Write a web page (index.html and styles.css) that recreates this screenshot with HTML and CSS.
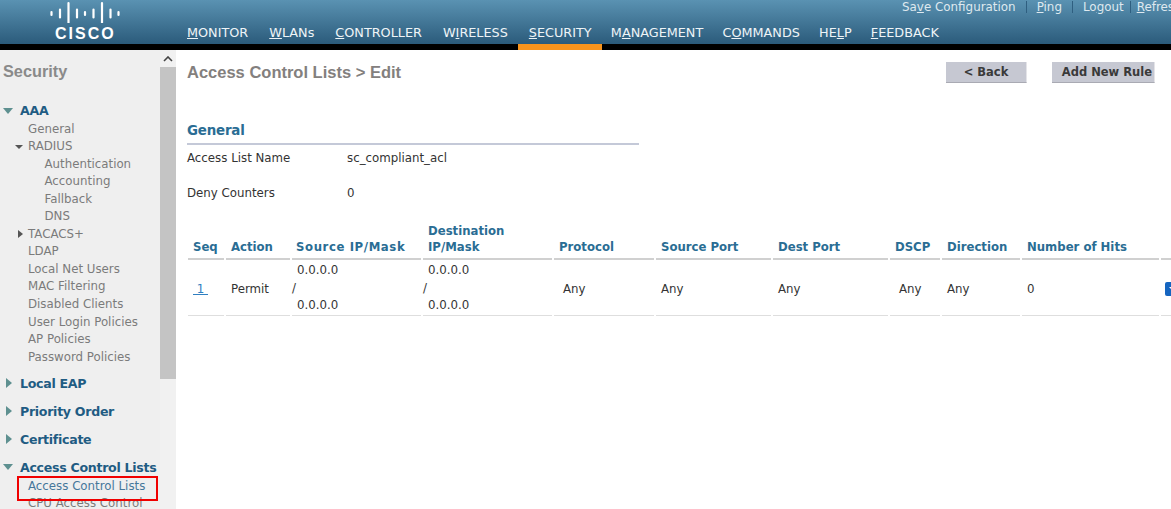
FILE: index.html
```html
<!DOCTYPE html>
<html lang="en">
<head>
<meta charset="utf-8">
<title>Access Control Lists > Edit</title>
<link rel="stylesheet" href="styles.css">
</head>
<body>
<header class="topbar">
  <div class="brand">
    <svg class="bars" width="70" height="22" viewBox="0 0 70 22" aria-hidden="true">
      <g fill="none" stroke="#fff" stroke-linecap="round" stroke-width="2.2">
        <path d="M1.5 11v3M10 8.500v8M18.500 2v20M27 8.500v8M35 11v3M43.500 8.500v8M52 2v20M60.500 8.500v8M68.500 11v3"/>
      </g>
    </svg>
    <div class="wordmark">CISCO</div>
  </div>
  <div class="topbar-main">
    <div class="utility">
      <a>Sa<u>v</u>e Configuration</a><i></i><a><u>P</u>ing</a><i></i><a>Lo<u>g</u>out</a><i class="tight"></i><a><u>R</u>efresh</a>
    </div>
    <nav class="mainnav">
      <a class="navitem"><u>M</u>ONITOR</a>
      <a class="navitem"><u>W</u>LANs</a>
      <a class="navitem"><u>C</u>ONTROLLER</a>
      <a class="navitem">W<u>I</u>RELESS</a>
      <a class="navitem narrow current"><u>S</u>ECURITY</a>
      <a class="navitem narrow">M<u>A</u>NAGEMENT</a>
      <a class="navitem narrow">C<u>O</u>MMANDS</a>
      <a class="navitem narrow">HE<u>L</u>P</a>
      <a class="navitem narrow"><u>F</u>EEDBACK</a>
    </nav>
  </div>
</header>
<div class="body-wrap">
  <aside class="sidebar">
    <div class="side-title">Security</div>
    <div class="sec first"><span class="tri down"></span>AAA</div>
    <div class="item l1">General</div>
    <div class="item l1 has"><span class="mini down"></span>RADIUS</div>
    <div class="item l2">Authentication</div>
    <div class="item l2">Accounting</div>
    <div class="item l2">Fallback</div>
    <div class="item l2">DNS</div>
    <div class="item l1 has"><span class="mini right"></span>TACACS+</div>
    <div class="item l1">LDAP</div>
    <div class="item l1">Local Net Users</div>
    <div class="item l1">MAC Filtering</div>
    <div class="item l1">Disabled Clients</div>
    <div class="item l1">User Login Policies</div>
    <div class="item l1">AP Policies</div>
    <div class="item l1">Password Policies</div>
    <div class="sec gap"><span class="tri right"></span>Local EAP</div>
    <div class="sec"><span class="tri right"></span>Priority Order</div>
    <div class="sec"><span class="tri right"></span>Certificate</div>
    <div class="sec"><span class="tri down"></span>Access Control Lists</div>
    <div class="item l1 active">Access Control Lists</div>
    <div class="item l1">CPU Access Control</div>
    <div class="redbox"></div>
  </aside>
  <div class="scrollbar">
    <div class="arrow"><svg width="10" height="6" viewBox="0 0 10 6" aria-hidden="true"><path d="M1 5l4-4 4 4" fill="none" stroke="#444" stroke-width="1.6"/></svg></div>
    <div class="thumb"></div>
  </div>
  <main class="content">
    <div class="titlebar">
      <h1>Access Control Lists &gt; Edit</h1>
      <div class="actions">
        <button class="btn btn-back">&lt; Back</button>
        <button class="btn btn-add">Add New Rule</button>
      </div>
    </div>
    <section class="general">
      <h2>General</h2>
      <div class="kv"><span class="k">Access List Name</span><span>sc_compliant_acl</span></div>
      <div class="kv kv2"><span class="k">Deny Counters</span><span>0</span></div>
    </section>
    <table class="rules">
      <colgroup>
        <col class="c1"><col class="c2"><col class="c3"><col class="c4"><col class="c5"><col class="c6"><col class="c7"><col class="c8"><col class="c9"><col class="c10"><col class="c11">
      </colgroup>
      <thead>
        <tr>
          <th class="seq">Seq</th><th>Action</th><th class="src">Source IP/Mask</th><th class="dst">Destination<br>IP/Mask</th><th>Protocol</th><th>Source Port</th><th>Dest Port</th><th>DSCP</th><th>Direction</th><th>Number of Hits</th><th></th>
        </tr>
      </thead>
      <tbody>
        <tr>
          <td class="seq"><a class="seqlink">&nbsp;1&nbsp;</a></td>
          <td>Permit</td>
          <td class="ip"><div class="ipv">0.0.0.0</div><div>/</div><div class="ipv">0.0.0.0</div></td>
          <td class="ip"><div class="ipv">0.0.0.0</div><div>/</div><div class="ipv">0.0.0.0</div></td>
          <td class="ind">Any</td>
          <td>Any</td>
          <td>Any</td>
          <td class="ind2">Any</td>
          <td>Any</td>
          <td>0</td>
          <td class="menucell"><span class="dropdown"><svg width="10" height="6" viewBox="0 0 10 6" aria-hidden="true"><path d="M1 1h8L5 5z" fill="#fff"/></svg></span></td>
        </tr>
      </tbody>
    </table>
  </main>
</div>
</body>
</html>
```
FILE: styles.css
```css
* { box-sizing: border-box; }
html, body { margin: 0; height: 509px; overflow: hidden; background: #fff; }
body { font-family: "DejaVu Sans", Verdana, sans-serif; font-size: 11.8px; color: #333; }

.topbar {
  height: 50px;
  display: flex;
  border-bottom: 6px solid #000;
  background: linear-gradient(#5a92b2, #2b5b7b);
  color: #fff;
}
.brand { width: 187px; flex: none; padding: 1px 0 0 50px; }
.bars { display: block; }
.wordmark {
  font: bold 16px "Liberation Sans", Arial, sans-serif;
  letter-spacing: 2px;
  margin: 3px 0 0 5px;
  line-height: 15px;
}
.topbar-main { flex: 1; min-width: 0; }
.utility {
  height: 25px;
  display: flex;
  align-items: flex-start;
  padding: 0 0 0 715px;
  font-size: 11.9px;
  line-height: 14px;
  white-space: nowrap;
  color: #dfe9ef;
}
.utility i { width: 1px; height: 12px; margin: 1px 10px 0; background: #2f5f80; flex: none; }
.utility i.tight { margin: 1px 6px 0; }
.mainnav { display: flex; height: 19px; }
.navitem {
  position: relative;
  font-size: 12.800px;
  line-height: 16px;
  padding-right: 21px;
  white-space: nowrap;
  color: #eef4f7;
}
.navitem.narrow { padding-right: 19.200px; }
.navitem.current::after {
  content: "";
  position: absolute;
  left: -11px; right: 9.200px;
  top: 19px;
  height: 6px;
  background: #f7941d;
}

.body-wrap { display: flex; height: 459px; overflow: hidden; }
.sidebar {
  position: relative;
  width: 160px;
  flex: none;
  background: #efefef;
  color: #7b7b7b;
  overflow: hidden;
}
.side-title {
  font: bold 16.300px/18px "Liberation Sans", Arial, sans-serif;
  color: #8a8a8a;
  padding: 12px 0 0 3px;
  height: 49.500px;
}
.sec {
  display: flex;
  align-items: center;
  height: 28px;
  padding-left: 20px;
  position: relative;
  font-weight: bold;
  font-size: 12.600px;
  color: #1f5c83;
  white-space: nowrap;
  letter-spacing: -.3px;
}
.sec.first { height: 21px; }
.sec.gap { margin-top: 3px; }
.item {
  height: 17.550px;
  line-height: 17.550px;
  position: relative;
  white-space: nowrap;
  font-size: 11.800px;
}
.l1 { padding-left: 28px; }
.l2 { padding-left: 44.500px; }
.item.active { color: #46779b; margin-top: -3.500px; }
.tri, .mini { position: absolute; width: 0; height: 0; }
.tri.down { left: 3px; top: 11px; border: 5.500px solid transparent; border-top: 6px solid #5e9090; border-bottom: 0; }
.sec.first .tri.down { top: 8px; }
.tri.right { left: 6px; top: 9px; border: 5.500px solid transparent; border-left: 6px solid #5e9090; border-right: 0; }
.mini.down { left: 15px; top: 7px; border: 4px solid transparent; border-top: 4px solid #555; border-bottom: 0; }
.mini.right { left: 18px; top: 4px; border: 4.500px solid transparent; border-left: 5px solid #555; border-right: 0; }
.redbox {
  position: absolute;
  left: 17px; top: 426px;
  width: 141px; height: 25px;
  border: 2px solid #f00000;
}

.scrollbar { width: 16px; flex: none; background: #f1f1f1; }
.arrow { height: 17px; display: flex; align-items: center; justify-content: center; }
.thumb { height: 312px; background: #c4c4c4; }

.content { flex: 1; min-width: 0; padding-left: 11px; }
.titlebar { display: flex; height: 58px; }
h1 {
  margin: 0;
  padding-top: 12px;
  font: bold 16.500px/20px "Liberation Sans", Arial, sans-serif;
  color: #83807e;
  flex: 1;
}
.actions { display: flex; padding: 12px 16px 0 0; align-items: flex-start; }
.btn {
  height: 21px;
  padding: 0;
  border: 0;
  border-right: 1px solid #e4e4e8;
  border-bottom: 1px solid #a9aab3;
  background: #c6c8d2;
  font: bold 11.500px/20px "DejaVu Sans", Verdana, sans-serif;
  color: #3a3a3a;
}
.btn-back { width: 81px; margin-right: 25px; }
.btn-add { width: 103px; text-align: right; padding-right: 2px; }

.general { width: 452px; padding-top: 12px; }
h2 {
  margin: 0;
  font-size: 13.400px;
  line-height: 16px;
  letter-spacing: -.2px;
  color: #2a6d94;
  padding-bottom: 5px;
  border-bottom: 2px solid #c4c9d8;
  height: 25px;
  padding-top: 3px;
}
.kv { display: flex; height: 27px; line-height: 27px; color: #333; }
.kv2 { margin-top: 8px; }
.k { width: 160px; flex: none; }

.rules {
  width: 984px;
  table-layout: fixed;
  border-collapse: separate;
  border-spacing: 2px 0;
  margin: 16px 0 0 -1px;
  color: #333;
}
.c1 { width: 36px; } .c2 { width: 64px; } .c3 { width: 129px; } .c4 { width: 129px; }
.c5 { width: 100px; } .c6 { width: 115px; } .c7 { width: 115px; } .c8 { width: 50px; }
.c9 { width: 78px; } .c10 { width: 137px; } .c11 { width: 31px; }
.rules th {
  text-align: left;
  vertical-align: bottom;
  font-size: 11.700px;
  line-height: 16px;
  color: #2a6d94;
  padding: 0 0 3px 5px;
  border-bottom: 2px solid #d0d0d0;
  white-space: nowrap;
}
.rules th.src { padding-left: 4px; letter-spacing: .6px; }
.rules th.dst { padding-left: 5px; }
.rules td {
  height: 56px;
  padding: 2px 0 0 5px;
  vertical-align: middle;
  border-bottom: 1px solid #dedede;
  white-space: nowrap;
}
.seqlink { color: #2f7fc1; text-decoration: underline; }
.rules td.ip { padding-left: 0; }
.ip div { line-height: 17.600px; height: 17.600px; }
.ipv { padding-left: 5px; }
.rules td.ind { padding-left: 9px; }
.rules td.ind2 { padding-left: 9px; }
.rules td.menucell { padding-left: 4px; }
.dropdown {
  display: flex;
  align-items: center;
  justify-content: center;
  width: 16px;
  height: 14px;
  background: #1565c0;
  border-radius: 2px;
}
```
